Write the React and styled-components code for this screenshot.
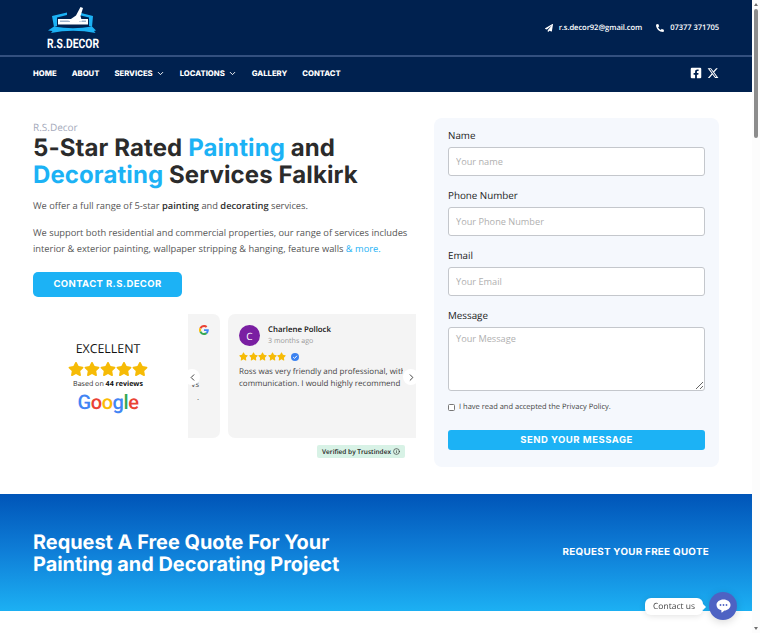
import React from 'react';
import styled, { createGlobalStyle } from 'styled-components';
import { FaPaperPlane, FaPhoneAlt, FaFacebookSquare, FaStar } from 'react-icons/fa';
import { FaXTwitter } from 'react-icons/fa6';
import { ChevronDown, ChevronLeft, ChevronRight, Info } from 'lucide-react';

const display = `Inter, "Liberation Sans", sans-serif`;
const body = `"Open Sans", "Noto Sans", sans-serif`;

const Global = createGlobalStyle`
  body { margin: 0; background: #fff; font-family: ${body}; color: #444; text-rendering: geometricPrecision; }
  * { box-sizing: border-box; }
`;

const Page = styled.div`
  width: 752px;
  min-height: 633px;
`;

const Header = styled.header`
  background: #00214f;
  height: 92px;
`;

const TopBar = styled.div`
  height: 57px;
  padding: 0 33px 2px 46px;
  display: flex;
  align-items: flex-start;
  justify-content: space-between;
  border-bottom: 2px solid #33507f;
`;

const LogoMark = styled.svg`
  width: 54px;
  height: 53px;
  display: block;
`;

const Contacts = styled.div`
  display: flex;
  gap: 14px;
  padding-top: 21px;
`;

const ContactItem = styled.span`
  display: flex;
  align-items: center;
  gap: 6px;
  color: #fff;
  font-size: 7.6px;
  font-weight: 600;
  letter-spacing: -0.08px;
  line-height: 14px;
  svg { font-size: 8px; }
`;

const NavBar = styled.nav`
  height: 35px;
  padding: 0 33px 3px;
  display: flex;
  align-items: center;
  justify-content: space-between;
`;

const NavList = styled.div`
  display: flex;
  gap: 15px;
`;

const NavLink = styled.a`
  display: flex;
  align-items: center;
  gap: 3px;
  color: #fff;
  font-family: ${display};
  font-size: 7.7px;
  font-weight: 800;
`;

const Socials = styled.div`
  display: flex;
  gap: 5px;
  color: #fff;
  font-size: 12px;
  svg { display: block; }
`;

const Hero = styled.main`
  display: grid;
  grid-template-columns: 383px 285px;
  gap: 18px;
  padding: 26px 33px 27px;
`;

const Eyebrow = styled.div`
  color: #a4a9bb;
  font-size: 10px;
  line-height: 14px;
  margin-top: 2px;
`;

const Title = styled.h1`
  margin: 0;
  font-family: ${display};
  font-size: 24px;
  line-height: 27px;
  font-weight: 700;
  color: #2b2b2b;
  letter-spacing: 0.1px;
  white-space: nowrap;
`;

const Accent = styled.span`
  color: #1cb2f5;
`;

const Copy = styled.p`
  margin: ${p => p.$top}px 0 0;
  font-size: 9.3px;
  line-height: 16px;
  color: #555;
  white-space: nowrap;
  b { font-weight: 600; color: #2e2e2e; }
`;

const ContactButton = styled.div`
  margin-top: 15px;
  width: 149px;
  height: 25px;
  border-radius: 5px;
  background: #1cb2f5;
  color: #fff;
  font-family: ${display};
  font-size: 9.5px;
  font-weight: 700;
  letter-spacing: 0.4px;
  display: flex;
  align-items: center;
  justify-content: center;
`;

const Widget = styled.div`
  margin-top: 17px;
  display: flex;
`;

const Rating = styled.div`
  width: 155px;
  height: 124px;
  display: flex;
  flex-direction: column;
  align-items: center;
  padding: 27px 5px 0 0;
`;

const Excellent = styled.div`
  font-size: 12.4px;
  font-weight: 500;
  color: #111;
  line-height: 16px;
  margin-bottom: 4px;
`;

const Stars = styled.div`
  display: flex;
  gap: ${p => p.$gap}px;
  color: #f6bb06;
  svg { display: block; }
`;

const BasedOn = styled.div`
  font-size: 7.1px;
  color: #333;
  margin-top: 2px;
  line-height: 11px;
  b { font-weight: 700; color: #111; }
`;

const GoogleWord = styled.div`
  font-family: "Roboto", sans-serif;
  font-size: 20px;
  font-weight: 500;
  line-height: 24px;
  letter-spacing: -0.4px;
`;

const Letter = styled.span`
  color: ${p => p.$c};
`;

const CarouselColumn = styled.div`
  width: 228px;
`;

const Carousel = styled.div`
  position: relative;
  height: 124px;
  display: flex;
  gap: 8px;
  overflow: hidden;
`;

const PeekCard = styled.div`
  width: 32px;
  flex: none;
  background: #f4f4f4;
  border-radius: 0 7px 7px 0;
  padding-top: 11px;
  svg { display: block; margin-left: 11px; }
`;

const PeekText = styled.div`
  margin-top: 43px;
  width: 11px;
  font-size: 8px;
  line-height: 13px;
  color: #444;
  text-align: right;
`;

const Card = styled.div`
  width: 196px;
  flex: none;
  background: #f4f4f4;
  border-radius: 7px 0 0 7px;
  padding: 11px;
`;

const ReviewHead = styled.div`
  display: flex;
  gap: 8px;
  align-items: center;
`;

const Avatar = styled.div`
  width: 21px;
  height: 21px;
  border-radius: 50%;
  background: #7a1fa2;
  color: #fff;
  font-size: 10px;
  display: flex;
  align-items: center;
  justify-content: center;
`;

const Reviewer = styled.div`
  font-size: 7.8px;
  font-weight: 600;
  color: #111;
  line-height: 11px;
`;

const ReviewDate = styled.div`
  font-size: 7.1px;
  color: #999;
  line-height: 10px;
`;

const StarRow = styled.div`
  display: flex;
  align-items: center;
  gap: 5px;
  margin-top: 6px;
`;

const ReviewText = styled.div`
  margin-top: 5px;
  width: 164px;
  height: 24px;
  overflow: hidden;
  white-space: nowrap;
  font-size: 8px;
  line-height: 12px;
  color: #444;
`;

const Arrow = styled.div`
  position: absolute;
  top: 55px;
  left: ${p => p.$left}px;
  width: 16px;
  height: 16px;
  border-radius: 50%;
  background: #fff;
  color: #333;
  display: flex;
  align-items: center;
  justify-content: center;
`;

const Verified = styled.div`
  margin: 7px 11px 0 auto;
  width: 88px;
  height: 13px;
  border-radius: 2px;
  background: #d8f2e6;
  color: #222;
  font-size: 6.5px;
  font-weight: 600;
  display: flex;
  align-items: center;
  justify-content: center;
  gap: 2px;
`;

const FormPanel = styled.form`
  background: #f5f8fd;
  border-radius: 8px;
  padding: 11px 14px 17px;
  height: 349px;
`;

const Field = styled.div`
  margin-bottom: 13px;
`;

const Label = styled.label`
  display: block;
  font-size: 9.8px;
  font-weight: 500;
  color: #222;
  line-height: 14px;
  margin-bottom: 4px;
`;

const Input = styled.input`
  display: block;
  width: 100%;
  height: 29px;
  border: 1px solid #c4c7cc;
  border-radius: 3px;
  background: #fff;
  padding: 0 7px;
  font-family: ${body};
  font-size: 9.2px;
  &::placeholder { color: #b0b0b0; }
`;

const TextArea = styled.textarea`
  display: block;
  width: 100%;
  height: 64px;
  border: 1px solid #c4c7cc;
  border-radius: 3px;
  background: #fff;
  padding: 4px 7px;
  font-family: ${body};
  font-size: 9.2px;
  &::placeholder { color: #b0b0b0; }
`;

const Consent = styled.label`
  display: flex;
  align-items: center;
  gap: 4px;
  margin-top: -3px;
  font-size: 7.5px;
  color: #444;
  line-height: 12px;
  input {
    appearance: none;
    margin: 0;
    width: 7px;
    height: 7px;
    border: 1px solid #777;
    border-radius: 1.5px;
    background: #fff;
  }
`;

const SendButton = styled.div`
  margin-top: 17px;
  height: 20px;
  border-radius: 3px;
  background: #1cb2f5;
  color: #fff;
  font-family: ${display};
  font-size: 9.5px;
  font-weight: 700;
  letter-spacing: 0.5px;
  display: flex;
  align-items: center;
  justify-content: center;
`;

const QuoteBand = styled.section`
  height: 117px;
  background: linear-gradient(180deg, #0055b8 0%, #0f7fd8 50%, #1cb0f3 100%);
  padding: 0 43px 0 33px;
  display: flex;
  align-items: center;
  justify-content: space-between;
`;

const QuoteTitle = styled.h2`
  margin: 0;
  font-family: ${display};
  font-size: 19.9px;
  line-height: 22px;
  font-weight: 700;
  color: #fff;
`;

const QuoteLink = styled.div`
  font-family: ${display};
  font-size: 9.8px;
  font-weight: 700;
  letter-spacing: 0.3px;
  color: #fff;
`;

const ChatDock = styled.div`
  position: fixed;
  right: 23px;
  bottom: 13px;
  display: flex;
  align-items: center;
  gap: 6px;
`;

const ChatLabel = styled.div`
  position: relative;
  height: 17px;
  padding: 0 8px;
  background: #fff;
  border-radius: 6px;
  font-size: 8.5px;
  color: #444;
  line-height: 17px;
  box-shadow: 0 1px 6px rgba(0, 0, 0, 0.12);
  &::after {
    content: '';
    position: absolute;
    right: -3px;
    top: 6px;
    border-left: 3px solid #fff;
    border-top: 3px solid transparent;
    border-bottom: 3px solid transparent;
  }
`;

const ChatButton = styled.div`
  width: 28px;
  height: 28px;
  border-radius: 50%;
  background: #4e62c3;
  box-shadow: 0 2px 8px rgba(0, 0, 0, 0.15);
  display: flex;
  align-items: center;
  justify-content: center;
`;

const Scrollbar = styled.div`
  position: fixed;
  top: 0;
  right: 0;
  bottom: 0;
  width: 8px;
  background: #fcfcfc;
  padding: 3px 2px 3px 2px;
  display: flex;
  flex-direction: column;
  align-items: center;
`;

const ScrollArrow = styled.div`
  width: 0;
  height: 0;
  border-left: 2.5px solid transparent;
  border-right: 2.5px solid transparent;
  ${p => (p.$down ? 'border-top: 3.5px solid #6f6f6f; margin-top: auto;' : 'border-bottom: 3.5px solid #6f6f6f;')}
`;

const ScrollThumb = styled.div`
  width: 4px;
  height: 129px;
  margin-top: 2.5px;
  background: #8c8c8c;
  border-radius: 2px;
`;

const GoogleG = ({ size }) => (
  <svg width={size} height={size} viewBox="0 0 48 48">
    <path fill="#EA4335" d="M24 9.500c3.500 0 6.700 1.200 9.200 3.600l6.900-6.900C35.900 2.400 30.500 0 24 0 14.600 0 6.500 5.400 2.600 13.200l8 6.200C12.500 13.700 17.800 9.500 24 9.500z" />
    <path fill="#4285F4" d="M47 24.500c0-1.600-.1-3.100-.4-4.500H24v9h12.900c-.6 3-2.200 5.500-4.700 7.200l7.700 6c4.500-4.200 7.100-10.300 7.100-17.700z" />
    <path fill="#FBBC05" d="M10.500 28.600c-.5-1.400-.8-3-.8-4.600s.3-3.200.8-4.600l-8-6.200C.9 16.400 0 20.100 0 24s.9 7.600 2.600 10.800l7.900-6.200z" />
    <path fill="#34A853" d="M24 48c6.500 0 11.900-2.100 15.900-5.800l-7.700-6c-2.100 1.400-4.900 2.300-8.200 2.300-6.200 0-11.500-4.200-13.400-9.900l-8 6.200C6.500 42.600 14.600 48 24 48z" />
  </svg>
);

const Logo = () => (
  <LogoMark viewBox="0 0 54 53">
    <path d="M6 16 L21 12.500 L21 15 L11 17.500 L11 26 L8 27 Z M47 16 L33 12.500 L33 15 L43 17.500 L43 26 L46 27 Z" fill="#1cb2f5" />
    <path d="M12 19 L42 19 L42 24.500 L12 24.500 Z" fill="#fff" />
    <path d="M14 20.500 L24 20.500 L24 22 L14 22 Z M33 20.500 L40 20.500 L40 22 L33 22 Z" fill="#9fb3cc" />
    <path d="M22 21 L30 15.500 L34.500 7 L37 8 L34.500 16 L36 21.500 Z" fill="#fff" />
    <path d="M8 26.500 Q27 30 46 26.500 L50 30.500 L48 31 L49.500 33 Q27 28.500 5 33 L6.500 31 L2 30.500 Z" fill="#1cb2f5" />
    <text x="27" y="48" textAnchor="middle" textLength="52" lengthAdjust="spacingAndGlyphs" fill="#fff" fontFamily="Roboto, sans-serif" fontWeight="700" fontSize="13">R.S.DECOR</text>
  </LogoMark>
);

const Bubble = () => (
  <svg width="15" height="14" viewBox="0 0 15 14">
    <path d="M7.500 0.500c4 0 7 2.400 7 5.500s-3 5.500-6 5.500L6 13.500c-.3.2-.6 0-.6-.3V11.300C2.500 10.700.5 8.600.5 6c0-3.100 3-5.500 7-5.500z" fill="#fff" />
    <circle cx="4.500" cy="6" r="0.900" fill="#4e62c3" />
    <circle cx="7.500" cy="6" r="0.900" fill="#4e62c3" />
    <circle cx="10.500" cy="6" r="0.900" fill="#4e62c3" />
  </svg>
);

const navItems = [
  { label: 'HOME' },
  { label: 'ABOUT' },
  { label: 'SERVICES', menu: true },
  { label: 'LOCATIONS', menu: true },
  { label: 'GALLERY' },
  { label: 'CONTACT' },
];

const fiveStars = size => [0, 1, 2, 3, 4].map(i => <FaStar key={i} size={size} />);

export default function App() {
  return (
    <Page>
      <Global />
      <Header>
        <TopBar>
          <Logo />
          <Contacts>
            <ContactItem><FaPaperPlane />r.s.decor92@gmail.com</ContactItem>
            <ContactItem><FaPhoneAlt />07377 371705</ContactItem>
          </Contacts>
        </TopBar>
        <NavBar>
          <NavList>
            {navItems.map(item => (
              <NavLink key={item.label}>
                {item.label}
                {item.menu && <ChevronDown size={9} strokeWidth={2.5} />}
              </NavLink>
            ))}
          </NavList>
          <Socials>
            <FaFacebookSquare />
            <FaXTwitter />
          </Socials>
        </NavBar>
      </Header>

      <Hero>
        <div>
          <Eyebrow>R.S.Decor</Eyebrow>
          <Title>
            5-Star Rated <Accent>Painting</Accent> and<br />
            <Accent>Decorating</Accent> Services Falkirk
          </Title>
          <Copy $top={10}>We offer a full range of 5-star <b>painting</b> and <b>decorating</b> services.</Copy>
          <Copy $top={11}>
            We support both residential and commercial properties, our range of services includes<br />
            interior &amp; exterior painting, wallpaper stripping &amp; hanging, feature walls <Accent>&amp; more.</Accent>
          </Copy>
          <ContactButton>CONTACT R.S.DECOR</ContactButton>
          <Widget>
            <Rating>
              <Excellent>EXCELLENT</Excellent>
              <Stars $gap={0}>{fiveStars(16)}</Stars>
              <BasedOn>Based on <b>44 reviews</b></BasedOn>
              <GoogleWord>
                <Letter $c="#4285f4">G</Letter>
                <Letter $c="#ea4335">o</Letter>
                <Letter $c="#fbbc05">o</Letter>
                <Letter $c="#4285f4">g</Letter>
                <Letter $c="#34a853">l</Letter>
                <Letter $c="#ea4335">e</Letter>
              </GoogleWord>
            </Rating>
            <CarouselColumn>
              <Carousel>
                <PeekCard>
                  <GoogleG size={10} />
                  <PeekText>vs<br />.</PeekText>
                </PeekCard>
                <Card>
                  <ReviewHead>
                    <Avatar>C</Avatar>
                    <div>
                      <Reviewer>Charlene Pollock</Reviewer>
                      <ReviewDate>3 months ago</ReviewDate>
                    </div>
                  </ReviewHead>
                  <StarRow>
                    <Stars $gap={0.5}>{fiveStars(9)}</Stars>
                    <svg width="8" height="8" viewBox="0 0 8 8">
                      <circle cx="4" cy="4" r="4" fill="#3b82f0" />
                      <path d="M2.200 4.100 L3.500 5.400 L5.900 2.800" stroke="#fff" strokeWidth="1" fill="none" />
                    </svg>
                  </StarRow>
                  <ReviewText>
                    Ross was very friendly and professional, with<br />
                    communication. I would highly recommend
                  </ReviewText>
                </Card>
                <Arrow $left={-4}><ChevronLeft size={11} /></Arrow>
                <Arrow $left={215}><ChevronRight size={11} /></Arrow>
              </Carousel>
              <Verified>Verified by Trustindex <Info size={7} /></Verified>
            </CarouselColumn>
          </Widget>
        </div>

        <FormPanel>
          <Field>
            <Label>Name</Label>
            <Input placeholder="Your name" />
          </Field>
          <Field>
            <Label>Phone Number</Label>
            <Input placeholder="Your Phone Number" />
          </Field>
          <Field>
            <Label>Email</Label>
            <Input placeholder="Your Email" />
          </Field>
          <Field>
            <Label>Message</Label>
            <TextArea placeholder="Your Message" />
          </Field>
          <Consent><input type="checkbox" />I have read and accepted the Privacy Policy.</Consent>
          <SendButton>SEND YOUR MESSAGE</SendButton>
        </FormPanel>
      </Hero>

      <QuoteBand>
        <QuoteTitle>Request A Free Quote For Your<br />Painting and Decorating Project</QuoteTitle>
        <QuoteLink>REQUEST YOUR FREE QUOTE</QuoteLink>
      </QuoteBand>

      <ChatDock>
        <ChatLabel>Contact us</ChatLabel>
        <ChatButton><Bubble /></ChatButton>
      </ChatDock>

      <Scrollbar>
        <ScrollArrow />
        <ScrollThumb />
        <ScrollArrow $down />
      </Scrollbar>
    </Page>
  );
}
